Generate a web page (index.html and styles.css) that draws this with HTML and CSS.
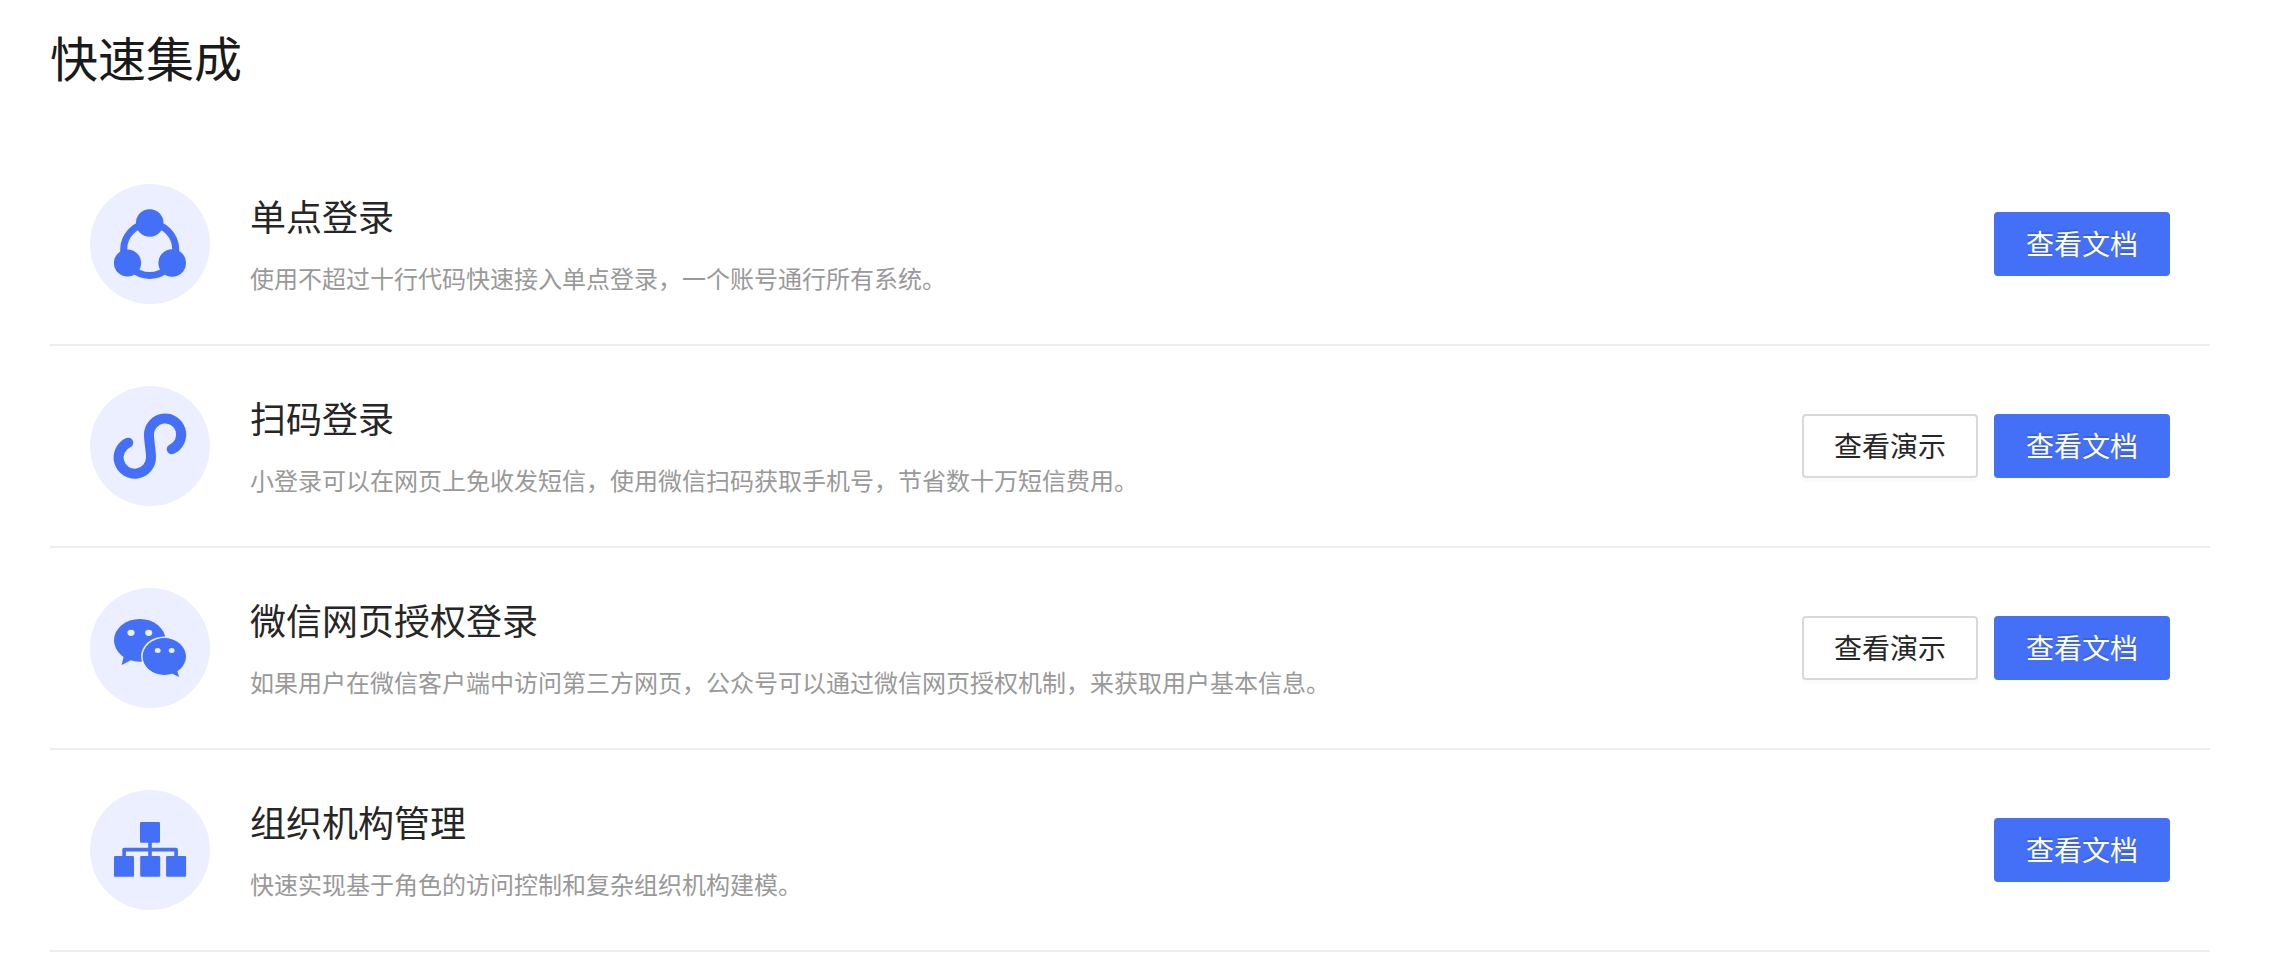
FILE: index.html
```html
<!DOCTYPE html>
<html lang="zh-CN">
<head>
<meta charset="utf-8">
<title>快速集成</title>
<link rel="stylesheet" href="styles.css">
</head>
<body>
<main class="page">
  <h1 class="page-title">快速集成</h1>
  <ul class="list">
    <li class="item">
      <svg class="icon" viewBox="0 0 120 120" aria-hidden="true">
        <circle class="disc" cx="60" cy="60" r="60"/>
        <circle class="line" cx="59.7" cy="65.5" r="26" stroke-width="7"/>
        <g class="fill"><circle cx="59.7" cy="39" r="13.8"/><circle cx="37.5" cy="79" r="13.6"/><circle cx="82.2" cy="79" r="13.8"/></g>
      </svg>
      <div class="text">
        <h2 class="item-title">单点登录</h2>
        <p class="desc">使用不超过十行代码快速接入单点登录，一个账号通行所有系统。</p>
      </div>
      <div class="actions">
        <button type="button" class="btn btn-primary">查看文档</button>
      </div>
    </li>
    <li class="item">
      <svg class="icon" viewBox="0 0 120 120" aria-hidden="true">
        <circle class="disc" cx="60" cy="60" r="60"/>
        <path class="line" stroke-width="10" stroke-linecap="round" d="M38.3 56.7A16.2 16.2 0 1 0 61 71.4C61 64 59 56 59 48.5A16.1 16.1 0 1 1 81.7 63.3"/>
      </svg>
      <div class="text">
        <h2 class="item-title">扫码登录</h2>
        <p class="desc">小登录可以在网页上免收发短信，使用微信扫码获取手机号，节省数十万短信费用。</p>
      </div>
      <div class="actions">
        <button type="button" class="btn">查看演示</button>
        <button type="button" class="btn btn-primary">查看文档</button>
      </div>
    </li>
    <li class="item">
      <svg class="icon" viewBox="0 0 120 120" aria-hidden="true">
        <circle class="disc" cx="60" cy="60" r="60"/>
        <g class="fill"><ellipse cx="49.8" cy="52.3" rx="25.8" ry="21.4"/><path d="M34 67L31.7 77L40.3 72.6L44 68Z"/></g>
        <ellipse class="disc" cx="74.3" cy="68.5" rx="23.2" ry="20"/>
        <g class="fill"><ellipse cx="74.3" cy="68.5" rx="21.7" ry="18.5"/><path d="M87 82L89 89L81.5 85.3L80 82Z"/></g>
        <g class="disc"><ellipse cx="41" cy="44.8" rx="3.6" ry="3.1"/><ellipse cx="58.7" cy="44.8" rx="3.6" ry="3.1"/><ellipse cx="67.7" cy="62.4" rx="2.9" ry="2.5"/><ellipse cx="81.7" cy="62.4" rx="2.9" ry="2.5"/></g>
      </svg>
      <div class="text">
        <h2 class="item-title">微信网页授权登录</h2>
        <p class="desc">如果用户在微信客户端中访问第三方网页，公众号可以通过微信网页授权机制，来获取用户基本信息。</p>
      </div>
      <div class="actions">
        <button type="button" class="btn">查看演示</button>
        <button type="button" class="btn btn-primary">查看文档</button>
      </div>
    </li>
    <li class="item">
      <svg class="icon" viewBox="0 0 120 120" aria-hidden="true">
        <circle class="disc" cx="60" cy="60" r="60"/>
        <path class="line" stroke-width="3.6" stroke-linejoin="round" d="M60 50V68M34.1 68V59.6H86.1V68"/>
        <g class="fill"><rect x="50" y="32" width="20" height="20.7" rx="1.2"/><rect x="24" y="66" width="20" height="20.7" rx="1.2"/><rect x="50.2" y="66" width="20" height="20.7" rx="1.2"/><rect x="76.1" y="66" width="20" height="20.7" rx="1.2"/></g>
      </svg>
      <div class="text">
        <h2 class="item-title">组织机构管理</h2>
        <p class="desc">快速实现基于角色的访问控制和复杂组织机构建模。</p>
      </div>
      <div class="actions">
        <button type="button" class="btn btn-primary">查看文档</button>
      </div>
    </li>
  </ul>
</main>
</body>
</html>
```
FILE: styles.css
```css
* {
  box-sizing: border-box;
}

body {
  margin: 0;
  background: #fff;
  color: #262626;
  font-family: "Noto Sans CJK SC", sans-serif;
}

.page {
  padding: 20px 68px 0 50px;
}

.page-title {
  margin: 0 0 52px;
  font-size: 48px;
  font-weight: 400;
  line-height: 72px;
  color: #1a1a1a;
}

.list {
  margin: 0;
  padding: 0;
  list-style: none;
}

.item {
  display: flex;
  align-items: center;
  gap: 40px;
  padding: 40px;
  border-bottom: 2px solid #eee;
}

.icon {
  flex: none;
  width: 120px;
  height: 120px;
}

.disc {
  fill: #ebefff;
}

.fill {
  fill: #446ff7;
}

.line {
  fill: none;
  stroke: #446ff7;
}

.text {
  flex: 1;
}

.item-title {
  margin: 0 0 18px;
  font-size: 36px;
  font-weight: 400;
  line-height: 50px;
}

.desc {
  margin: 0;
  font-size: 24px;
  line-height: 40px;
  color: #999;
}

.actions {
  display: flex;
  gap: 16px;
}

.btn {
  height: 64px;
  padding: 0 30px 2px;
  border: 2px solid #d9d9d9;
  border-radius: 4px;
  background: #fff;
  box-shadow: 0 4px 0 rgba(0, 0, 0, 0.016);
  color: #262626;
  font-family: inherit;
  font-size: 28px;
  line-height: 40px;
  cursor: pointer;
}

.btn-primary {
  border-color: #446ff7;
  background: #446ff7;
  box-shadow: none;
  color: #fff;
  text-shadow: 0 -2px 0 rgba(0, 0, 0, 0.12);
}
```
